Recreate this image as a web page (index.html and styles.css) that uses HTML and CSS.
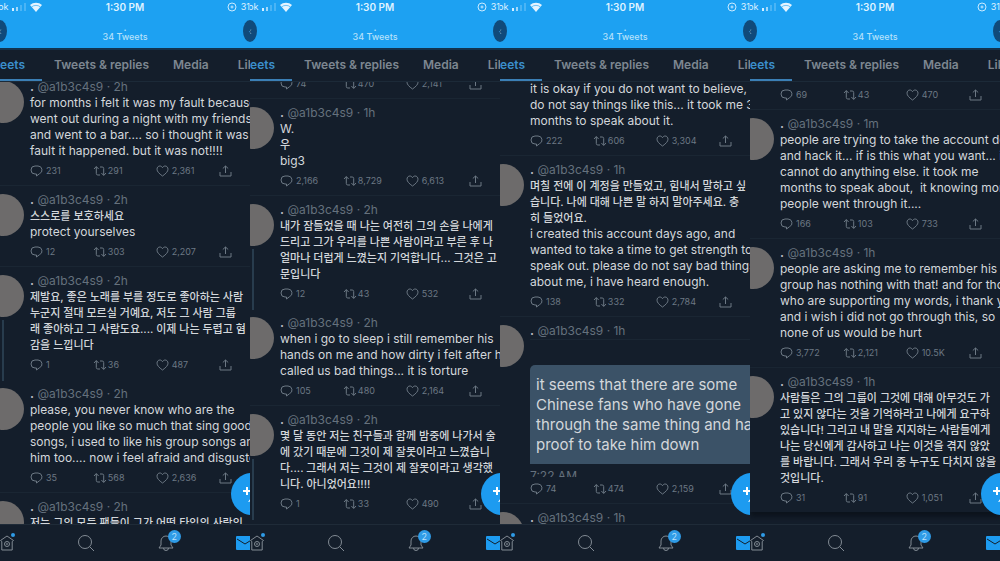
FILE: index.html
```
<!DOCTYPE html>
<html lang="en">
<head>
  <meta charset="UTF-8" />
  <meta name="viewport" content="width=device-width, initial-scale=1" />
  <title>34 Tweets</title>
  <link rel="stylesheet" href="styles.css">
</head>
<body>

  <!-- icons -->
  <svg class="sprite" aria-hidden="true">
    <symbol id="reply" viewBox="0 0 13 12"><path d="M5 1h3a4 4 0 0 1 1.500 7.700L6.500 11V9H5a4 4 0 0 1 0-8z"/></symbol>
    <symbol id="retweet" viewBox="0 0 14 12"><path d="M1 4l2.300-2.500L5.600 4M3.300 1.800V8.500q0 1.500 1.500 1.500H7M7 2h2.200q1.500 0 1.500 1.500V10M8.400 8l2.300 2.500L13 8"/></symbol>
    <symbol id="heart" viewBox="0 0 13 12"><path d="M6.500 11C3 8.500 1 6.500 1 4.200 1 2.300 2.300 1 3.900 1c1.100 0 2 .6 2.600 1.700C7.100 1.600 8 1 9.100 1 10.700 1 12 2.300 12 4.200c0 2.300-2 4.300-5.500 6.800z"/></symbol>
    <symbol id="share" viewBox="0 0 13 12"><path d="M1 7v4h11V7M6.500 8V1M3.800 3.500L6.500 1l2.700 2.500"/></symbol>
    <symbol id="home" viewBox="0 0 16 18"><path d="M8 2l6.500 4.500-1.300 1V16H2.800V7.500l-1.300-1z"/><circle cx="8" cy="10" r="2.500"/><circle cx="8" cy="10" r=".5"/></symbol>
    <symbol id="search" viewBox="0 0 18 18"><circle cx="8" cy="8" r="6.500"/><path d="M12.600 12.600L17 17"/></symbol>
    <symbol id="bell" viewBox="0 0 16 18"><path d="M1 14h14l-2-3V7A5 5 0 0 0 3 7v4zM5.500 14a2.500 2.500 0 0 0 5 0"/></symbol>
    <symbol id="mail" viewBox="0 0 18 14"><rect width="18" height="14" rx="1" fill="#1d9bf0" stroke="none"/><path d="M1 3l8 5 8-5" stroke="#15202b"/></symbol>
    <symbol id="wifi" viewBox="0 0 12 10"><path d="M0 3a9 9 0 0 1 12 0L6 10z" fill="#e4f4ff" stroke="none"/><path d="M1.500 5a7 7 0 0 1 9 0" stroke="#1da1f2" stroke-width=".6"/></symbol>
    <symbol id="bars" viewBox="0 0 14 8"><g stroke="none" fill="#d5eeff"><path d="M0 5h2v3H0z"/><path d="M4 4h2v4H4z" opacity=".7"/><path d="M8 2h2v6H8zM12 0h2v8h-2z" opacity=".25"/></g></symbol>
    <symbol id="lock" viewBox="0 0 10 10"><g stroke="#c9e9ff"><circle cx="5" cy="5" r="4"/><circle cx="5" cy="5" r="1"/></g></symbol>
    <symbol id="compose" viewBox="0 0 20 24"><path d="M6 5v8M2 9h8" stroke="#fff" stroke-width="2"/><path d="M7 20l3-4q5-1 9-8-1 9-7 11z" fill="#fff" stroke="none"/></symbol>
  </svg>

  <main class="wall">

    <section class="phone">
      <header class="top">
        <div class="status"><span class="carrier">bk <svg class="bars"><use href="#bars"/></svg><svg class="wifi"><use href="#wifi"/></svg></span><time>1:30 PM</time><span class="battery"><svg class="lock"><use href="#lock"/></svg>31</span></div>
        <div class="title"><button class="round" aria-label="Back">‹</button><h1><b>.</b>34 Tweets</h1><button class="round" aria-label="More">·</button></div>
      </header>
      <nav class="tabs"><a class="active" href="#">Tweets</a><a href="#">Tweets &amp; replies</a><a href="#">Media</a><a href="#">Likes</a></nav>
      <div class="feed from-name">
        <article class="tweet">
          <div class="side"><div class="avatar"></div></div>
          <div class="body">
            <a class="name" href="#"><b>.</b> @a1b3c4s9 · 2h</a>
            <p>for months i felt it was my fault because<br>went out during a night with my friends<br>and went to a bar.... so i thought it was my<br>fault it happened. but it was not!!!!</p>
            <div class="actions"><button><svg><use href="#reply"/></svg>231</button><button><svg class="rt"><use href="#retweet"/></svg>291</button><button><svg><use href="#heart"/></svg>2,361</button><button aria-label="Share"><svg><use href="#share"/></svg></button></div>
          </div>
        </article>
        <article class="tweet">
          <div class="side"><div class="avatar"></div></div>
          <div class="body">
            <a class="name" href="#"><b>.</b> @a1b3c4s9 · 2h</a>
            <p><span lang="ko">스스로를 보호하세요</span><br>protect yourselves</p>
            <div class="actions"><button><svg><use href="#reply"/></svg>12</button><button><svg class="rt"><use href="#retweet"/></svg>303</button><button><svg><use href="#heart"/></svg>2,207</button><button aria-label="Share"><svg><use href="#share"/></svg></button></div>
          </div>
        </article>
        <article class="tweet thread">
          <div class="side"><div class="avatar"></div></div>
          <div class="body">
            <a class="name" href="#"><b>.</b> @a1b3c4s9 · 2h</a>
            <p lang="ko">제발요, 좋은 노래를 부를 정도로 좋아하는 사람<br>누군지 절대 모르실 거예요, 저도 그 사람 그룹<br>래 좋아하고 그 사람도요.... 이제 나는 두렵고 혐<br>감을 느낍니다</p>
            <div class="actions"><button><svg><use href="#reply"/></svg>1</button><button><svg class="rt"><use href="#retweet"/></svg>36</button><button><svg><use href="#heart"/></svg>487</button><button aria-label="Share"><svg><use href="#share"/></svg></button></div>
          </div>
        </article>
        <article class="tweet">
          <div class="side"><div class="avatar"></div></div>
          <div class="body">
            <a class="name" href="#"><b>.</b> @a1b3c4s9 · 2h</a>
            <p>please, you never know who are the<br>people you like so much that sing good<br>songs, i used to like his group songs and<br>him too.... now i feel afraid and disgusted</p>
            <div class="actions"><button><svg><use href="#reply"/></svg>35</button><button><svg class="rt"><use href="#retweet"/></svg>568</button><button><svg><use href="#heart"/></svg>2,636</button><button aria-label="Share"><svg><use href="#share"/></svg></button></div>
          </div>
        </article>
        <article class="tweet">
          <div class="side"><div class="avatar"></div></div>
          <div class="body">
            <a class="name" href="#"><b>.</b> @a1b3c4s9 · 2h</a>
            <p lang="ko">저는 그의 모든 팬들이 그가 어떤 타입의 사람인</p>
          </div>
        </article>
        <button class="fab" aria-label="Compose"><svg><use href="#compose"/></svg></button>
      </div>
      <nav class="bottom"><a class="dot" href="#" aria-label="Home"><svg><use href="#home"/></svg></a><a href="#" aria-label="Search"><svg><use href="#search"/></svg></a><a href="#" aria-label="Notifications"><svg><use href="#bell"/></svg><span class="badge">2</span></a><a href="#" aria-label="Messages"><svg><use href="#mail"/></svg></a></nav>
    </section>

    <section class="phone">
      <header class="top">
        <div class="status"><span class="carrier">bk <svg class="bars"><use href="#bars"/></svg><svg class="wifi"><use href="#wifi"/></svg></span><time>1:30 PM</time><span class="battery"><svg class="lock"><use href="#lock"/></svg>31</span></div>
        <div class="title"><button class="round" aria-label="Back">‹</button><h1><b>.</b>34 Tweets</h1><button class="round" aria-label="More">·</button></div>
      </header>
      <nav class="tabs"><a class="active" href="#">Tweets</a><a href="#">Tweets &amp; replies</a><a href="#">Media</a><a href="#">Likes</a></nav>
      <div class="feed from-counts">
        <article class="tweet">
          <div class="side"></div>
          <div class="body">
            <div class="actions"><button><svg><use href="#reply"/></svg>74</button><button><svg class="rt"><use href="#retweet"/></svg>470</button><button><svg><use href="#heart"/></svg>2,141</button><button aria-label="Share"><svg><use href="#share"/></svg></button></div>
          </div>
        </article>
        <article class="tweet">
          <div class="side"><div class="avatar"></div></div>
          <div class="body">
            <a class="name" href="#"><b>.</b> @a1b3c4s9 · 1h</a>
            <p>W.<br><span lang="ko">우</span><br>big3</p>
            <div class="actions"><button><svg><use href="#reply"/></svg>2,166</button><button><svg class="rt"><use href="#retweet"/></svg>8,729</button><button><svg><use href="#heart"/></svg>6,613</button><button aria-label="Share"><svg><use href="#share"/></svg></button></div>
          </div>
        </article>
        <article class="tweet thread">
          <div class="side"><div class="avatar"></div></div>
          <div class="body">
            <a class="name" href="#"><b>.</b> @a1b3c4s9 · 2h</a>
            <p lang="ko">내가 잠들었을 때 나는 여전히 그의 손을 나에게<br>드리고 그가 우리를 나쁜 사람이라고 부른 후 나<br>얼마나 더럽게 느꼈는지 기억합니다... 그것은 고<br>문입니다</p>
            <div class="actions"><button><svg><use href="#reply"/></svg>12</button><button><svg class="rt"><use href="#retweet"/></svg>43</button><button><svg><use href="#heart"/></svg>532</button><button aria-label="Share"><svg><use href="#share"/></svg></button></div>
          </div>
        </article>
        <article class="tweet">
          <div class="side"><div class="avatar"></div></div>
          <div class="body">
            <a class="name" href="#"><b>.</b> @a1b3c4s9 · 2h</a>
            <p>when i go to sleep i still remember his<br>hands on me and how dirty i felt after he<br>called us bad things... it is torture</p>
            <div class="actions"><button><svg><use href="#reply"/></svg>105</button><button><svg class="rt"><use href="#retweet"/></svg>480</button><button><svg><use href="#heart"/></svg>2,164</button><button aria-label="Share"><svg><use href="#share"/></svg></button></div>
          </div>
        </article>
        <article class="tweet thread">
          <div class="side"><div class="avatar"></div></div>
          <div class="body">
            <a class="name" href="#"><b>.</b> @a1b3c4s9 · 2h</a>
            <p lang="ko">몇 달 동안 저는 친구들과 함께 밤중에 나가서 술<br>에 갔기 때문에 그것이 제 잘못이라고 느꼈습니<br>다.... 그래서 저는 그것이 제 잘못이라고 생각했<br>니다. 아니었어요!!!!</p>
            <div class="actions"><button><svg><use href="#reply"/></svg>1</button><button><svg class="rt"><use href="#retweet"/></svg>33</button><button><svg><use href="#heart"/></svg>490</button><button aria-label="Share"><svg><use href="#share"/></svg></button></div>
          </div>
        </article>
        <button class="fab" aria-label="Compose"><svg><use href="#compose"/></svg></button>
      </div>
      <nav class="bottom"><a class="dot" href="#" aria-label="Home"><svg><use href="#home"/></svg></a><a href="#" aria-label="Search"><svg><use href="#search"/></svg></a><a href="#" aria-label="Notifications"><svg><use href="#bell"/></svg><span class="badge">2</span></a><a href="#" aria-label="Messages"><svg><use href="#mail"/></svg></a></nav>
    </section>

    <section class="phone">
      <header class="top">
        <div class="status"><span class="carrier">bk <svg class="bars"><use href="#bars"/></svg><svg class="wifi"><use href="#wifi"/></svg></span><time>1:30 PM</time><span class="battery"><svg class="lock"><use href="#lock"/></svg>31</span></div>
        <div class="title"><button class="round" aria-label="Back">‹</button><h1><b>.</b>34 Tweets</h1><button class="round" aria-label="More">·</button></div>
      </header>
      <nav class="tabs"><a class="active" href="#">Tweets</a><a href="#">Tweets &amp; replies</a><a href="#">Media</a><a href="#">Likes</a></nav>
      <div class="feed from-text">
        <article class="tweet">
          <div class="side"></div>
          <div class="body">
            <p>it is okay if you do not want to believe, b<br>do not say things like this... it took me 3<br>months to speak about it.</p>
            <div class="actions"><button><svg><use href="#reply"/></svg>222</button><button><svg class="rt"><use href="#retweet"/></svg>606</button><button><svg><use href="#heart"/></svg>3,304</button><button aria-label="Share"><svg><use href="#share"/></svg></button></div>
          </div>
        </article>
        <article class="tweet">
          <div class="side"><div class="avatar"></div></div>
          <div class="body">
            <a class="name" href="#"><b>.</b> @a1b3c4s9 · 1h</a>
            <p><span lang="ko">며칠 전에 이 계정을 만들었고, 힘내서 말하고 싶<br>습니다. 나에 대해 나쁜 말 하지 말아주세요. 충<br>히 들었어요.</span><br>i created this account days ago, and<br>wanted to take a time to get strength to<br>speak out. please do not say bad things<br>about me, i have heard enough.</p>
            <div class="actions"><button><svg><use href="#reply"/></svg>138</button><button><svg class="rt"><use href="#retweet"/></svg>332</button><button><svg><use href="#heart"/></svg>2,784</button><button aria-label="Share"><svg><use href="#share"/></svg></button></div>
          </div>
        </article>
        <article class="tweet">
          <div class="side"><div class="avatar"></div></div>
          <div class="body">
            <a class="name" href="#"><b>.</b> @a1b3c4s9 · 1h</a>
            <figure class="media">
              <blockquote>it seems that there are some<br>Chinese fans who have gone<br>through the same thing and have<br>proof to take him down</blockquote>
              <figcaption>7:22 AM</figcaption>
            </figure>
            <div class="actions"><button><svg><use href="#reply"/></svg>74</button><button><svg class="rt"><use href="#retweet"/></svg>474</button><button><svg><use href="#heart"/></svg>2,159</button><button aria-label="Share"><svg><use href="#share"/></svg></button></div>
          </div>
        </article>
        <article class="tweet">
          <div class="side"><div class="avatar"></div></div>
          <div class="body">
            <a class="name" href="#"><b>.</b> @a1b3c4s9 · 1h</a>
          </div>
        </article>
        <button class="fab" aria-label="Compose"><svg><use href="#compose"/></svg></button>
      </div>
      <nav class="bottom"><a class="dot" href="#" aria-label="Home"><svg><use href="#home"/></svg></a><a href="#" aria-label="Search"><svg><use href="#search"/></svg></a><a href="#" aria-label="Notifications"><svg><use href="#bell"/></svg><span class="badge">2</span></a><a href="#" aria-label="Messages"><svg><use href="#mail"/></svg></a></nav>
    </section>

    <section class="phone">
      <header class="top">
        <div class="status"><span class="carrier">bk <svg class="bars"><use href="#bars"/></svg><svg class="wifi"><use href="#wifi"/></svg></span><time>1:30 PM</time><span class="battery"><svg class="lock"><use href="#lock"/></svg>31</span></div>
        <div class="title"><button class="round" aria-label="Back">‹</button><h1><b>.</b>34 Tweets</h1><button class="round" aria-label="More">·</button></div>
      </header>
      <nav class="tabs"><a class="active" href="#">Tweets</a><a href="#">Tweets &amp; replies</a><a href="#">Media</a><a href="#">Likes</a></nav>
      <div class="feed from-actions">
        <article class="tweet">
          <div class="side"></div>
          <div class="body">
            <div class="actions"><button><svg><use href="#reply"/></svg>69</button><button><svg class="rt"><use href="#retweet"/></svg>43</button><button><svg><use href="#heart"/></svg>470</button><button aria-label="Share"><svg><use href="#share"/></svg></button></div>
          </div>
        </article>
        <article class="tweet">
          <div class="side"><div class="avatar"></div></div>
          <div class="body">
            <a class="name" href="#"><b>.</b> @a1b3c4s9 · 1m</a>
            <p>people are trying to take the account down<br>and hack it... if is this what you want... i<br>cannot do anything else. it took me<br>months to speak about,&nbsp; it knowing more<br>people went through it....</p>
            <div class="actions"><button><svg><use href="#reply"/></svg>166</button><button><svg class="rt"><use href="#retweet"/></svg>103</button><button><svg><use href="#heart"/></svg>733</button><button aria-label="Share"><svg><use href="#share"/></svg></button></div>
          </div>
        </article>
        <article class="tweet">
          <div class="side"><div class="avatar"></div></div>
          <div class="body">
            <a class="name" href="#"><b>.</b> @a1b3c4s9 · 1h</a>
            <p>people are asking me to remember his<br>group has nothing with that! and for those<br>who are supporting my words, i thank you<br>and i wish i did not go through this, so<br>none of us would be hurt</p>
            <div class="actions"><button><svg><use href="#reply"/></svg>3,772</button><button><svg class="rt"><use href="#retweet"/></svg>2,121</button><button><svg><use href="#heart"/></svg>10.5K</button><button aria-label="Share"><svg><use href="#share"/></svg></button></div>
          </div>
        </article>
        <article class="tweet last">
          <div class="side"><div class="avatar"></div></div>
          <div class="body">
            <a class="name" href="#"><b>.</b> @a1b3c4s9 · 1h</a>
            <p lang="ko">사람들은 그의 그룹이 그것에 대해 아무것도 가<br>고 있지 않다는 것을 기억하라고 나에게 요구하<br>있습니다! 그리고 내 말을 지지하는 사람들에게<br>나는 당신에게 감사하고 나는 이것을 겪지 않았<br>를 바랍니다. 그래서 우리 중 누구도 다치지 않을<br>것입니다.</p>
            <div class="actions"><button><svg><use href="#reply"/></svg>31</button><button><svg class="rt"><use href="#retweet"/></svg>91</button><button><svg><use href="#heart"/></svg>1,051</button><button aria-label="Share"><svg><use href="#share"/></svg></button></div>
          </div>
        </article>
        <button class="fab" aria-label="Compose"><svg><use href="#compose"/></svg></button>
      </div>
      <nav class="bottom"><a class="dot" href="#" aria-label="Home"><svg><use href="#home"/></svg></a><a href="#" aria-label="Search"><svg><use href="#search"/></svg></a><a href="#" aria-label="Notifications"><svg><use href="#bell"/></svg><span class="badge">2</span></a><a href="#" aria-label="Messages"><svg><use href="#mail"/></svg></a></nav>
    </section>

  </main>

</body>
</html>
```
FILE: styles.css
```
* {
  box-sizing: border-box;
}
body {
  margin: 0;
  background: #15202b;
  color: #d3d7db;
  font-family: Inter, "Noto Sans CJK KR", sans-serif;
  font-size: 12px;
  line-height: 16px;
}
a {
  color: inherit;
  text-decoration: none;
}
button {
  padding: 0;
  border: none;
  background: none;
  color: inherit;
  font: inherit;
  cursor: pointer;
}
svg {
  fill: none;
  stroke: currentColor;
  display: block;
}
.sprite {
  display: none;
}
.wall {
  display: grid;
  grid-template-columns: repeat(4, 1fr);
  height: 100vh;
}
.phone {
  display: flex;
  flex-direction: column;
  min-width: 0;
  min-height: 0;
  overflow: hidden;
  background: #141e2b;
}

/* blue header */
.top {
  height: 48px;
  background: #1da1f2;
  color: #dff2ff;
}
.status {
  display: grid;
  grid-template-columns: 1fr auto 1fr;
  height: 14px;
  font-size: 10px;
  font-weight: 600;
  line-height: 14px;
  white-space: nowrap;
}
.carrier,
.battery {
  display: flex;
  align-items: center;
  gap: 4px;
  margin-left: -2px;
  font-size: 9px;
  font-weight: 400;
}
.battery {
  justify-content: flex-end;
  margin: 0;
}
.bars {
  width: 14px;
  height: 8px;
}
.wifi {
  width: 12px;
  height: 10px;
}
.lock {
  width: 10px;
  height: 10px;
}
.title {
  display: flex;
  justify-content: space-between;
  align-items: center;
  height: 34px;
  margin: 0 -7px;
}
.title h1 {
  margin: 0;
  padding-top: 4px;
  font-size: 9px;
  font-weight: 500;
  line-height: 10px;
  text-align: center;
  color: #b5e0fb;
}
.title h1 b {
  display: block;
  line-height: 8px;
}
.round {
  width: 14px;
  height: 22px;
  border-radius: 50%;
  background: #104a7a;
  color: #5f9fce;
  font-size: 10px;
}

.tabs {
  display: flex;
  height: 34px;
  border-top: 2px solid #12324d;
  border-bottom: 1px solid #1c2a38;
  color: #7d8791;
  font-weight: 600;
  line-height: 30px;
  white-space: nowrap;
}
.tabs a {
  padding: 0 12px;
}
.tabs a:first-child {
  margin-left: -34px;
}
.tabs a:first-child,
.tabs a:last-child {
  padding: 0 17px;
}
.tabs .active {
  color: #3b8fcb;
  border-bottom: 2px solid #3b7fb5;
}

/* timeline */
.feed {
  position: relative;
  flex: 1;
  min-height: 0;
  overflow: hidden;
}
.from-name .tweet:first-child {
  margin-top: -9px;
}
.from-text .tweet:first-child {
  margin-top: -7px;
}
.from-counts .tweet:first-child {
  margin-top: -16px;
}
.from-actions .tweet:first-child {
  margin-top: -5px;
}
.tweet {
  display: flex;
  gap: 6px;
  padding: 6px 0;
  border-bottom: 1px solid #1a2633;
}
.thread {
  border-bottom-color: transparent;
}
.last {
  border: none;
  box-shadow: 0 5px 5px #0c131c;
}
.side {
  display: flex;
  flex-direction: column;
  flex: none;
  align-items: center;
  width: 42px;
  margin-left: -18px;
}
.avatar {
  flex: none;
  width: 42px;
  height: 42px;
  margin-top: 2px;
  border-radius: 50%;
  background: #6d6b6b;
}
.thread .side::after {
  content: "";
  flex: 1;
  width: 2px;
  margin: 3px 0 -8px;
  background: #283c4d;
}
.body {
  flex: 1;
  min-width: 0;
}
.name {
  display: block;
  color: #65717d;
}
.name b {
  color: #b5babf;
}
.body p {
  margin: 0;
  white-space: nowrap;
}
[lang="ko"] {
  font-size: 11px;
  font-weight: 500;
}
.actions {
  display: grid;
  grid-template-columns: 2fr 2fr 2fr 1fr;
  margin-top: 4px;
  color: #6c7884;
  font-size: 9px;
}
.actions button {
  display: flex;
  align-items: center;
  gap: 3px;
  height: 16px;
}
.actions svg {
  width: 13px;
  height: 12px;
}
.actions .rt {
  width: 14px;
  margin-right: -2px;
}

.media {
  height: 138px;
  margin: 0;
  padding-top: 25px;
  border-top: 1px solid #1a2633;
  overflow: hidden;
}
.media blockquote {
  margin: 0;
  padding: 10px 6px 9px;
  border-radius: 5px 0 0 0;
  background: #3b5267;
  font-size: 15px;
  line-height: 20px;
  white-space: nowrap;
}
.media figcaption {
  padding-top: 4px;
  color: #65717d;
}

.fab {
  position: absolute;
  right: -23px;
  bottom: 9px;
  width: 42px;
  height: 42px;
  padding-left: 10px;
  border-radius: 50%;
  background: #1d9bf0;
}
.fab svg {
  width: 20px;
  height: 24px;
}

.bottom {
  display: flex;
  justify-content: space-between;
  align-items: center;
  height: 37px;
  padding: 0 0 1px;
  margin: 0 -4px 0 -2px;
  border-top: 1px solid #1f2b38;
  color: #828b94;
}
.bottom a {
  position: relative;
}
.bottom svg {
  width: 18px;
  height: 18px;
}
.dot::after {
  content: "";
  position: absolute;
  top: -1px;
  right: 1px;
  width: 4px;
  height: 4px;
  border-radius: 50%;
  background: #2f9be6;
}
.badge {
  position: absolute;
  top: -4px;
  right: -6px;
  width: 13px;
  height: 13px;
  border-radius: 50%;
  background: #2f9be6;
  color: #b9e0fa;
  font-size: 9px;
  line-height: 13px;
  text-align: center;
}
```
